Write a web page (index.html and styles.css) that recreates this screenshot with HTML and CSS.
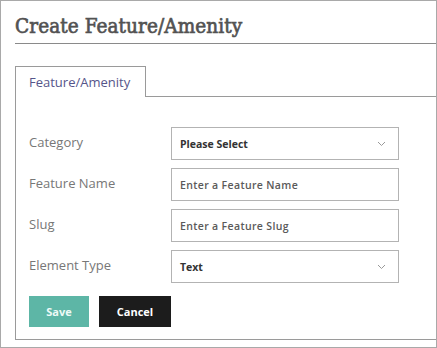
FILE: index.html
```html
<!DOCTYPE html>
<html>
<head>
<meta charset="utf-8">
<link rel="stylesheet" href="styles.css">
</head>
<body>
<div class="page">
  <h1 class="title">Create Feature/Amenity</h1>
  <div class="tabs">
    <div class="tab">Feature/Amenity</div>
  </div>
  <div class="panel">
    <div class="row">
      <label class="label">Category</label>
      <div class="field select"><span class="value">Please Select</span>
        <svg class="chev" width="9" height="6" viewBox="0 0 9 6"><path d="M1 1l3.5 3.5L8 1" fill="none" stroke="#999" stroke-width="1"/></svg>
      </div>
    </div>
    <div class="row">
      <label class="label">Feature Name</label>
      <div class="field"><span class="placeholder">Enter a Feature Name</span></div>
    </div>
    <div class="row">
      <label class="label">Slug</label>
      <div class="field"><span class="placeholder">Enter a Feature Slug</span></div>
    </div>
    <div class="row">
      <label class="label">Element Type</label>
      <div class="field select"><span class="value">Text</span>
        <svg class="chev" width="9" height="6" viewBox="0 0 9 6"><path d="M1 1l3.5 3.5L8 1" fill="none" stroke="#999" stroke-width="1"/></svg>
      </div>
    </div>
    <div class="actions">
      <button class="btn save">Save</button>
      <button class="btn cancel">Cancel</button>
    </div>
  </div>
</div>
</body>
</html>
```
FILE: styles.css
```css
html, body {
  margin: 0;
  padding: 0;
  background: #fff;
}
.page {
  width: 437px;
  height: 348px;
  box-sizing: border-box;
  border: 1px solid #a9a9a9;
  padding-left: 14px;
  font-family: "Open Sans", "Liberation Sans", sans-serif;
  overflow: hidden;
}
.title {
  margin: 0;
  padding: 12px 0 4px 0;
  line-height: 26px;
  font-family: "DejaVu Serif", serif;
  font-stretch: condensed;
  font-size: 20.5px;
  font-weight: normal;
  color: #525252;
  border-bottom: 1px solid #8a8a8a;
  -webkit-text-stroke: 0.65px #525252;
  letter-spacing: 0.1px;
}
.tabs {
  margin-top: 22px;
  height: 30px;
  display: flex;
  border-bottom: 1px solid #9a9a9a;
}
.tab {
  box-sizing: border-box;
  width: 131px;
  height: 31px;
  margin-bottom: -1px;
  border: 1px solid #9a9a9a;
  border-bottom: none;
  background: #fff;
  padding-left: 13px;
  display: flex;
  align-items: center;
  font-size: 13px;
  color: #55558a;
}
.panel {
  border-left: 1px solid #9a9a9a;
  border-bottom: 1px solid #9a9a9a;
  padding: 30px 0 12px 13px;
  display: flex;
  flex-direction: column;
  gap: 8px;
}
.row {
  display: flex;
  align-items: center;
  height: 33px;
}
.label {
  width: 142px;
  font-size: 13px;
  color: #777;
  margin-top: -4px;
}
.field {
  box-sizing: border-box;
  width: 228px;
  height: 33px;
  border: 1px solid #b3b3b3;
  padding: 0 12px 0 8px;
  display: flex;
  align-items: center;
  justify-content: space-between;
  font-size: 10.5px;
}
.value {
  font-weight: bold;
  color: #333;
}
.placeholder {
  font-weight: 600;
  color: #5a5a5a;
  letter-spacing: 0.35px;
}
.chev {
  display: block;
}
.actions {
  display: flex;
  gap: 10px;
  margin-top: 5px;
}
.btn {
  border: none;
  height: 31px;
  font-family: "Open Sans", "Liberation Sans", sans-serif;
  font-size: 11px;
  font-weight: bold;
  color: #fff;
  padding: 0;
}
.save {
  width: 60px;
  background: #5db6a6;
  color: #eefaf7;
}
.cancel {
  width: 72px;
  background: #1c1c1c;
}
```
